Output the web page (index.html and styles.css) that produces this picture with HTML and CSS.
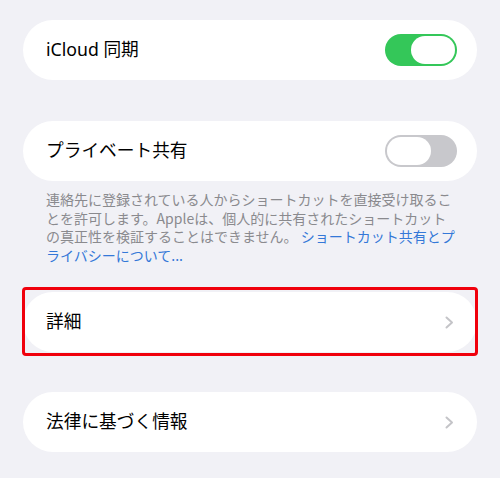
FILE: index.html
```html
<!DOCTYPE html>
<html lang="ja">
<head>
<meta charset="utf-8">
<title>ショートカット設定</title>
<link rel="stylesheet" href="styles.css">
</head>
<body>
<main class="page">
  <section class="card row card-first">
    <span class="label">iCloud 同期</span>
    <span class="toggle on"><span class="knob"></span></span>
  </section>

  <section class="card row card-second">
    <span class="label">プライベート共有</span>
    <span class="toggle off"><span class="knob"></span></span>
  </section>
  <p class="footer">連絡先に登録されている人からショートカットを直接受け取ることを許可します。Appleは、個人的に共有されたショートカットの真正性を検証することはできません。 <a class="link" href="#">ショートカット共有とプライバシーについて...</a></p>

  <div class="highlight-wrap">
    <section class="card row">
      <span class="label">詳細</span>
      <svg class="chevron" width="9" height="13" viewBox="0 0 9 13"><path d="M1.5 1.5 L7 6.5 L1.5 11.5" fill="none" stroke="#c4c4c8" stroke-width="2" stroke-linecap="round" stroke-linejoin="round"/></svg>
    </section>
    <div class="highlight"></div>
  </div>

  <section class="card row card-last">
    <span class="label">法律に基づく情報</span>
    <svg class="chevron" width="9" height="13" viewBox="0 0 9 13"><path d="M1.5 1.5 L7 6.5 L1.5 11.5" fill="none" stroke="#c4c4c8" stroke-width="2" stroke-linecap="round" stroke-linejoin="round"/></svg>
  </section>
</main>
</body>
</html>
```

FILE: styles.css
```css
html, body {
  margin: 0;
  padding: 0;
  background: #f1f1f6;
}
body {
  width: 500px;
  height: 478px;
  overflow: hidden;
  font-family: "Noto Sans", "Noto Sans CJK JP", sans-serif;
  color: #000;
}
.page {
  padding: 20px 23px 0 23px;
  display: flex;
  flex-direction: column;
}
.card {
  background: #fff;
  border-radius: 30px;
  height: 60px;
  box-sizing: border-box;
}
.row {
  display: flex;
  align-items: center;
  justify-content: space-between;
  padding: 0 20px 0 23px;
}
.label {
  font-size: 17.7px;
  letter-spacing: 0;
  line-height: 1;
}
.card-second {
  margin-top: 41px;
}
.toggle {
  width: 72px;
  height: 32px;
  border-radius: 16px;
  display: flex;
  align-items: center;
  padding: 0 2px;
  box-sizing: border-box;
}
.toggle.on {
  background: #34c759;
  justify-content: flex-end;
}
.toggle.off {
  background: #c8c8cc;
  justify-content: flex-start;
}
.knob {
  width: 44px;
  height: 28px;
  border-radius: 14px;
  background: #fff;
}
.footer {
  margin: 9px 0 0 0;
  padding: 0 0 0 23px;
  width: 412px;
  font-size: 14px;
  line-height: 18.5px;
  color: #8a8a8e;
  font-family: "Noto Sans CJK JP", sans-serif;
}
.link {
  color: #3478d8;
  text-decoration: none;
}
.highlight-wrap {
  position: relative;
  margin-top: 28px;
}
.highlight {
  position: absolute;
  top: -5px;
  left: -1px;
  right: -1px;
  bottom: -4px;
  border: 3px solid #f0000c;
  border-radius: 4px;
  pointer-events: none;
}
.chevron {
  margin-right: 3px;
}
.card-last {
  margin-top: 40px;
}
```
